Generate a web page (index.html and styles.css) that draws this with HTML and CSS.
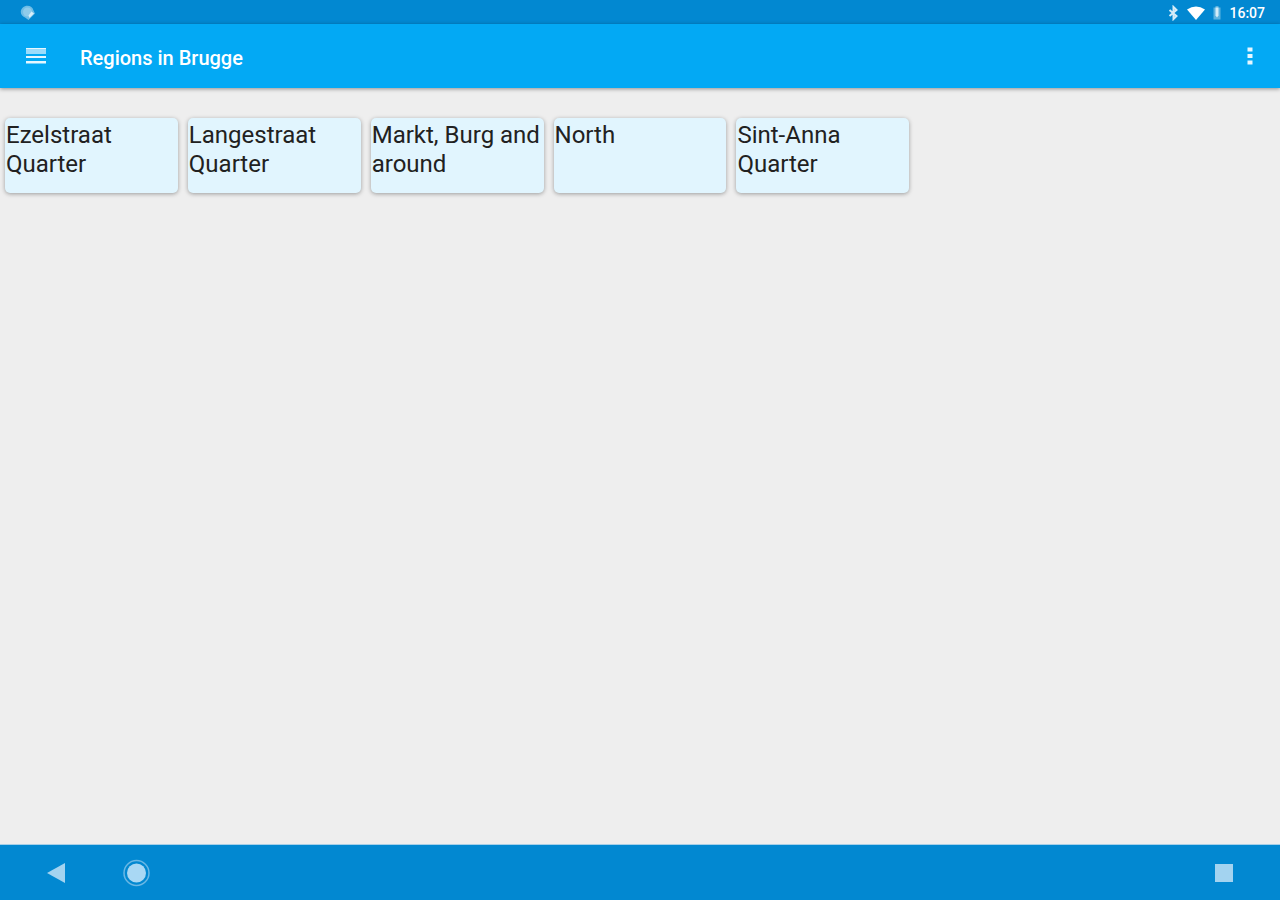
FILE: index.html
```html
<!DOCTYPE html>
<html lang="en">
<head>
    <meta charset="UTF-8">
    <meta name="viewport" content="width=device-width, initial-scale=1.0">
    <title>Regions in Brugge</title>
    <link rel="stylesheet" href="styles.css">
</head>
<body>

<div class="status-bar">
    <svg class="notification" width="16" height="16" viewBox="0 0 16 16">
        <path d="M7.500.8C10.500.8 12.800 2.500 13.300 5L15 8.500 8.500 15 5 12.500C2.500 11.500.8 9.500.8 7 .8 3.500 4 .8 7.500.8z" fill="#6fbde6"/>
        <circle cx="7.500" cy="7" r="4.500" fill="#8fcbea"/>
        <path d="M11.500 6.500l2.500 2-4.500 4.500-1-2.500z" fill="#d8eefa"/>
    </svg>
    <div class="status-icons">
        <svg width="12" height="16" viewBox="0 0 12 16">
            <path d="M2.500 5l7 6L6.500 14V2l3 3-7 6" fill="none" stroke="#d5ecf8" stroke-width="2"/>
        </svg>
        <svg width="18" height="16" viewBox="0 0 18 16">
            <path d="M0 4.500Q9-1.500 18 4.500L9 15z" fill="#fff"/>
        </svg>
        <svg width="8" height="16" viewBox="0 0 8 16">
            <path d="M2.500 1h3v1.500H7.500V14.500H.5V2.500h2z" fill="#5cb3e0"/>
            <path d="M2.500 2.500h3v8l-1.500 2-1.500-2z" fill="#d3ecf8"/>
        </svg>
        <span class="clock">16:07</span>
    </div>
</div>

<header class="app-bar">
    <button class="icon-button" aria-label="Open menu">
        <svg width="20" height="16" viewBox="0 0 20 16">
            <path d="M0 0h20v6H0z" fill="#9bdcfb"/>
            <path d="M0 0h20v1H0zM0 8h20v2H0zM0 13h20v2.500H0z" fill="#e6f7ff"/>
        </svg>
    </button>
    <h1>Regions in Brugge</h1>
    <button class="icon-button more" aria-label="More options">
        <svg width="6" height="18" viewBox="0 0 6 18">
            <path d="M.5.5h5v4h-5zM.5 7h5v4h-5zM.5 13.500h5v4h-5z" fill="#e6f7ff"/>
        </svg>
    </button>
</header>

<main class="regions">
    <button class="card">Ezelstraat Quarter</button>
    <button class="card">Langestraat Quarter</button>
    <button class="card">Markt, Burg and around</button>
    <button class="card">North</button>
    <button class="card">Sint-Anna Quarter</button>
</main>

<nav class="nav-bar">
    <button class="nav-button" aria-label="Back">
        <svg width="28" height="28" viewBox="0 0 28 28">
            <path d="M5 14L23 4v20z" fill="#a3d3f0"/>
        </svg>
    </button>
    <button class="nav-button" aria-label="Home">
        <svg width="28" height="28" viewBox="0 0 28 28">
            <circle cx="14.500" cy="14" r="12.500" fill="none" stroke="#6ab7e4" stroke-width="1.500"/>
            <circle cx="14.500" cy="14" r="9.500" fill="#a9d8f4"/>
        </svg>
    </button>
    <button class="nav-button recent" aria-label="Recent apps">
        <svg width="28" height="28" viewBox="0 0 28 28">
            <path d="M5 5h18v18H5z" fill="#a3d3f0"/>
        </svg>
    </button>
</nav>

</body>
</html>
```

FILE: styles.css
```css
* {
    box-sizing: border-box;
}
body {
    display: flex;
    flex-direction: column;
    min-height: 100vh;
    margin: 0;
    background: #eee;
    font-family: Roboto, sans-serif;
}
button {
    padding: 0;
    border: none;
    background: none;
    font: inherit;
    cursor: pointer;
}
svg {
    display: block;
}
.status-bar {
    display: flex;
    align-items: center;
    justify-content: space-between;
    height: 24px;
    padding: 2px 15px 0 20px;
    background: #0288d1;
}
.status-icons {
    display: flex;
    align-items: center;
    gap: 8px;
}
.clock {
    color: #fff;
    font-size: 14px;
    font-weight: 500;
    line-height: 16px;
}
.app-bar {
    display: flex;
    align-items: center;
    height: 64px;
    padding: 0 18px 0 14px;
    background: #03a9f4;
    box-shadow: 0 1px 4px rgba(0, 0, 0, 0.4);
}
.app-bar h1 {
    margin: 0 0 0 22px;
    padding-top: 4px;
    color: #fff;
    font-size: 20px;
    font-weight: 500;
    line-height: 24px;
}
.icon-button {
    display: flex;
    justify-content: center;
    width: 44px;
}
.more {
    width: 24px;
    margin-left: auto;
}
.regions {
    display: grid;
    flex: 1;
    grid-template-columns: repeat(7, 1fr);
    align-content: start;
    gap: 10px;
    padding: 30px 5px;
}
.card {
    display: flex;
    min-height: 75px;
    padding: 3px 1px;
    border-radius: 5px;
    background: #e1f5fe;
    box-shadow: 0 1px 4px rgba(0, 0, 0, 0.35);
    color: #212121;
    font-size: 24px;
    line-height: 29px;
    text-align: left;
}
.nav-bar {
    display: flex;
    align-items: center;
    height: 56px;
    padding: 0 16px;
    border-top: 1px solid #a5cfe8;
    background: #0288d1;
}
.nav-button {
    display: flex;
    justify-content: center;
    width: 80px;
}
.recent {
    margin-left: auto;
}
```
